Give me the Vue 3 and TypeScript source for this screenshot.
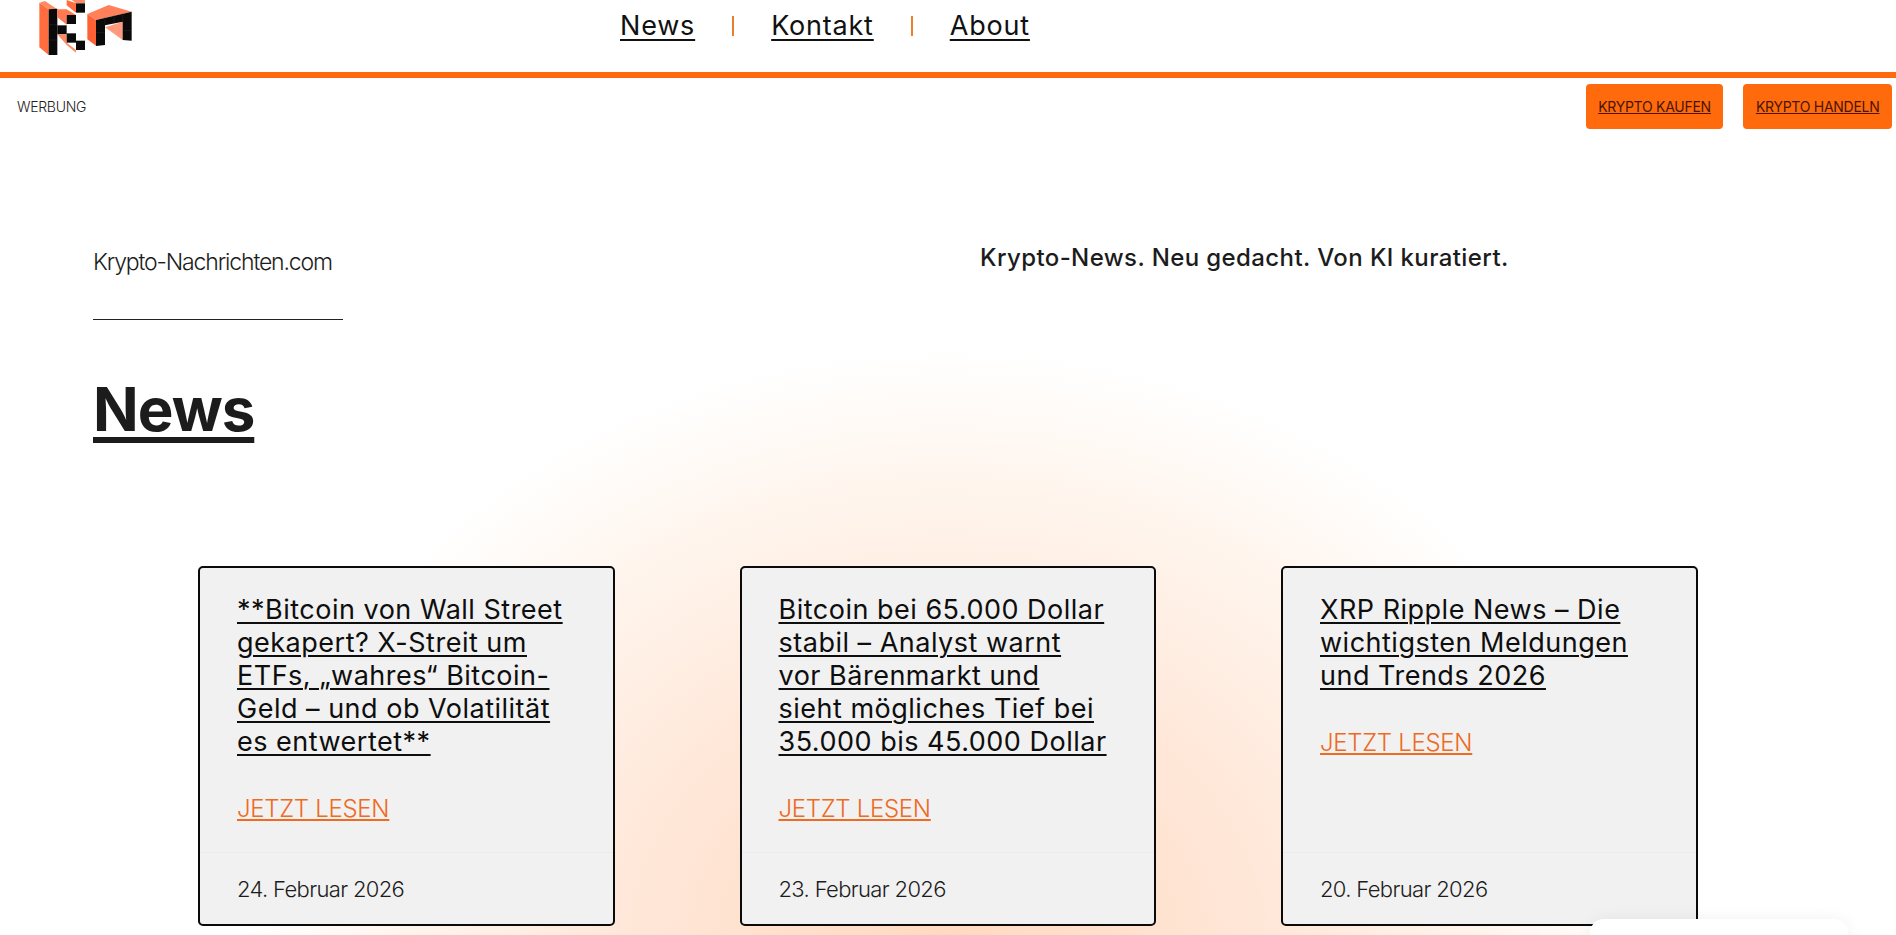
<script setup lang="ts">
interface Post {
  lines: string[]
  date: string
}

const navItems = ['News', 'Kontakt', 'About']

const posts: Post[] = [
  {
    lines: ['**Bitcoin von Wall Street', 'gekapert? X-Streit um', 'ETFs, „wahres“ Bitcoin-', 'Geld – und ob Volatilität', 'es entwertet**'],
    date: '24. Februar 2026'
  },
  {
    lines: ['Bitcoin bei 65.000 Dollar', 'stabil – Analyst warnt', 'vor Bärenmarkt und', 'sieht mögliches Tief bei', '35.000 bis 45.000 Dollar'],
    date: '23. Februar 2026'
  },
  {
    lines: ['XRP Ripple News – Die', 'wichtigsten Meldungen', 'und Trends 2026'],
    date: '20. Februar 2026'
  }
]
</script>

<template>
  <div class="page">
    <header class="top">
      <svg class="logo" viewBox="0 0 330 180" width="110" height="60">
        <polygon points="28,8 45,3 82,28 56,28" fill="#ff8a63" />
        <polygon points="28,8 56,28 56,165 28,142" fill="#ff6d3f" />
        <polygon points="56,28 82,26 82,165 56,165" fill="#0a0a0a" />
        <polygon points="110,0 138,10 138,38 110,16" fill="#ff6d3f" />
        <polygon points="125,0 165,0 165,10 138,10" fill="#ff8a63" />
        <rect x="138" y="10" width="27" height="28" fill="#0a0a0a" />
        <polygon points="82,28 110,28 138,45 110,45 110,74 82,52" fill="#ff7a50" />
        <rect x="110" y="45" width="28" height="27" fill="#0a0a0a" />
        <rect x="82" y="76" width="28" height="27" fill="#0a0a0a" />
        <polygon points="82,103 110,103 110,128 138,150 138,158 110,135" fill="#ff8a63" />
        <rect x="110" y="100" width="28" height="28" fill="#0a0a0a" />
        <rect x="138" y="122" width="27" height="28" fill="#0a0a0a" />
        <polygon points="172,42 236,15 305,35 198,60" fill="#ff8059" />
        <polygon points="172,42 198,60 198,137 172,118" fill="#ff6034" />
        <polygon points="225,82 278,65 278,120" fill="#ff9a7c" />
        <polygon points="198,60 305,35 305,122 278,120 278,65 225,76 225,135 198,138" fill="#0a0a0a" />
        <path d="M56 74H82M56 120H82M225 52V76M252 46V70M278 40V65M278 92H305M198 98H225" stroke="#3a3a3a" stroke-width="1" fill="none" />
      </svg>
      <nav class="nav">
        <template v-for="(item, i) in navItems" :key="item">
          <span v-if="i > 0" class="sep"></span>
          <a href="#" class="nav-link">{{ item }}</a>
        </template>
      </nav>
    </header>

    <div class="ad-row">
      <span class="ad-label">WERBUNG</span>
      <div class="ad-buttons">
        <a href="#" class="ad-btn">KRYPTO KAUFEN</a>
        <a href="#" class="ad-btn">KRYPTO HANDELN</a>
      </div>
    </div>

    <main class="content">
      <div class="intro">
        <div class="brand-col">
          <p class="brand">Krypto-Nachrichten.com</p>
          <div class="rule"></div>
        </div>
        <p class="tagline">Krypto-News. Neu gedacht. Von KI kuratiert.</p>
      </div>

      <h1 class="heading"><a href="#">News</a></h1>

      <section class="cards">
        <article v-for="post in posts" :key="post.date" class="card">
          <div class="card-body">
            <h2 class="card-title">
              <a href="#"><template v-for="(line, i) in post.lines" :key="i"><br v-if="i > 0" />{{ line }}</template></a>
            </h2>
            <a href="#" class="read-more">JETZT LESEN</a>
          </div>
          <div class="card-date">{{ post.date }}</div>
        </article>
      </section>
    </main>

    <div class="float-box"></div>
  </div>
</template>

<style>
html,
body {
  overflow: hidden;
  background: #fff;
}
</style>

<style scoped>
.page {
  height: 935px;
  overflow: hidden;
  font-family: Inter, "Liberation Sans", sans-serif;
  color: #1c1c1c;
  background: #fff;
}

a {
  color: inherit;
}

.top {
  height: 72px;
  display: flex;
  border-bottom: 6px solid #ff6a0d;
  overflow: hidden;
}

.logo {
  flex: none;
  margin-left: 30px;
}

.nav {
  display: flex;
  align-items: center;
  height: 51px;
  margin-left: 480px;
}

.nav-link {
  font-size: 27px;
  letter-spacing: 0.8px;
  color: #111;
  text-decoration-thickness: 2px;
  text-underline-offset: 4px;
}

.sep {
  width: 2px;
  height: 20px;
  margin: 0 37px;
  background: #e8802f;
}

.ad-row {
  display: flex;
  justify-content: space-between;
  align-items: center;
  height: 45px;
  margin-top: 6px;
  padding: 0 4px 0 17px;
}

.ad-label {
  font-size: 14px;
  font-weight: 300;
  letter-spacing: -0.3px;
  color: #222;
}

.ad-buttons {
  display: flex;
  gap: 20px;
}

.ad-btn {
  display: flex;
  align-items: center;
  height: 45px;
  padding: 0 12.5px;
  border-radius: 4px;
  background: #ff6a0d;
  color: #4a1503;
  font-size: 14px;
  letter-spacing: -0.27px;
  white-space: nowrap;
}

.content {
  height: 806px;
  padding: 0 93px;
  background: radial-gradient(ellipse 700px 600px at 948px 821px, #ffd9c0 0%, #ffe7d8 45%, #fff6ef 80%, #fff 100%);
}

.intro {
  display: flex;
  padding-top: 119px;
}

.brand-col {
  width: 887px;
}

.brand {
  margin: 0;
  font-size: 23px;
  font-weight: 300;
  line-height: 28px;
  letter-spacing: -1.15px;
}

.rule {
  width: 250px;
  height: 1px;
  margin-top: 43px;
  background: #222;
}

.tagline {
  margin: -5px 0 0;
  font-size: 24px;
  font-weight: 500;
  line-height: 30px;
  letter-spacing: 0.4px;
}

.heading {
  margin: 52px 0 0;
  font-size: 60px;
  font-weight: 700;
  line-height: 75px;
  letter-spacing: -1px;
}

.heading a {
  text-decoration-thickness: 6px;
  text-underline-offset: 6px;
}

.cards {
  display: flex;
  gap: 125px;
  margin: 119px 0 0 105px;
}

.card {
  display: flex;
  flex-direction: column;
  width: 416.5px;
  height: 360px;
  box-sizing: border-box;
  border: 2px solid #0a0a0a;
  border-radius: 5px;
  background: #f1f1f1;
}

.card-body {
  flex: 1;
  padding: 25px 37px 0;
}

.card-title {
  margin: 0;
  font-size: 27px;
  font-weight: 400;
  line-height: 33px;
  letter-spacing: 0.5px;
  color: #0e0e0e;
  white-space: nowrap;
}

.card-title a {
  text-decoration-thickness: 2px;
  text-underline-offset: 3px;
}

.read-more {
  display: inline-block;
  margin-top: 35px;
  font-size: 24px;
  font-weight: 300;
  line-height: 32px;
  letter-spacing: -0.3px;
  color: #ef6a22;
}

.card-date {
  height: 72px;
  box-sizing: border-box;
  padding: 0 37px;
  border-top: 1px solid #ebebeb;
  font-size: 22px;
  font-weight: 300;
  line-height: 73px;
  letter-spacing: -0.65px;
  color: #1c1c1c;
}

.float-box {
  position: fixed;
  left: 1590px;
  top: 919px;
  width: 258px;
  height: 60px;
  border-radius: 14px;
  background: #fff;
  box-shadow: 0 0 16px rgba(0, 0, 0, 0.06);
}
</style>
